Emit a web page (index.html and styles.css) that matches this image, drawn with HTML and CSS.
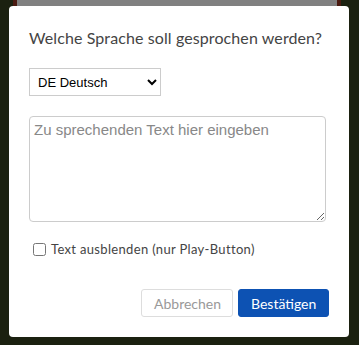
FILE: index.html
```html
<!DOCTYPE html>
<html lang="de">
<head>
    <meta charset="UTF-8">
    <title>Sprache wählen</title>
    <link rel="stylesheet" href="styles.css">
</head>
<body>
    <div class="backdrop">
        <div class="behind"><div class="behind-bar"></div></div>
        <div class="modal">
            <h2 class="modal-title">Welche Sprache soll gesprochen werden?</h2>
            <select class="lang-select">
                <option>DE Deutsch</option>
                <option>EN English</option>
            </select>
            <textarea class="speech-text" placeholder="Zu sprechenden Text hier eingeben"></textarea>
            <label class="hide-text">
                <input type="checkbox">
                <span>Text ausblenden (nur Play-Button)</span>
            </label>
            <div class="actions">
                <button class="btn btn-cancel">Abbrechen</button>
                <button class="btn btn-confirm">Bestätigen</button>
            </div>
        </div>
    </div>
</body>
</html>
```

FILE: styles.css
```css
* {
    margin: 0;
    padding: 0;
    box-sizing: border-box;
}

body {
    background: #1b2110;
    font-family: 'Lato', 'Liberation Sans', sans-serif;
    color: #444;
    width: 359px;
    height: 345px;
    overflow: hidden;
}

.backdrop {
    padding-left: 9px;
}

.behind {
    width: 328px;
    height: 6px;
    margin-left: 4px;
    padding: 0 4px;
    background: #4a1a10;
}

.behind-bar {
    height: 6px;
    background: #808080;
}

.modal {
    width: 340px;
    height: 331px;
    background: #fff;
    border-radius: 4px;
    padding: 21px 20px 20px;
    display: flex;
    flex-direction: column;
    align-items: flex-start;
}

.modal-title {
    font-weight: 400;
    font-size: 16px;
    line-height: 22px;
    color: #444;
    letter-spacing: 0.1px;
}

.lang-select {
    margin-top: 19px;
    width: 132px;
    height: 28px;
    border: 1px solid #ccc;
    border-radius: 0;
    background: #fff;
    font-family: 'Liberation Sans', Arial, sans-serif;
    font-size: 13px;
    color: #000;
    padding: 0 4px;
}

.speech-text {
    margin-top: 20px;
    width: 297px;
    height: 106px;
    border: 1px solid #ccc;
    border-radius: 4px;
    padding: 4px 4px;
    font-family: 'Liberation Sans', Arial, sans-serif;
    font-size: 15px;
    resize: vertical;
}

.speech-text::placeholder {
    color: #888;
}

.hide-text {
    margin-top: 19px;
    display: flex;
    align-items: center;
    gap: 5px;
    font-size: 13px;
    letter-spacing: 0.33px;
    color: #444;
    padding-left: 4px;
}

.hide-text input {
    width: 13px;
    height: 13px;
    margin: 0;
}

.actions {
    margin-top: auto;
    align-self: stretch;
    display: flex;
    justify-content: flex-end;
    gap: 5px;
}

.btn {
    height: 28px;
    padding: 0 12px;
    border-radius: 3px;
    font-family: 'Lato', 'Liberation Sans', sans-serif;
    font-size: 14px;
    cursor: pointer;
}

.btn-cancel {
    width: 92px;
    background: #fff;
    border: 1px solid #ddd;
    color: #999;
}

.btn-confirm {
    width: 91px;
    background: #0d52b3;
    border: 1px solid #0d52b3;
    color: #fff;
}
```
